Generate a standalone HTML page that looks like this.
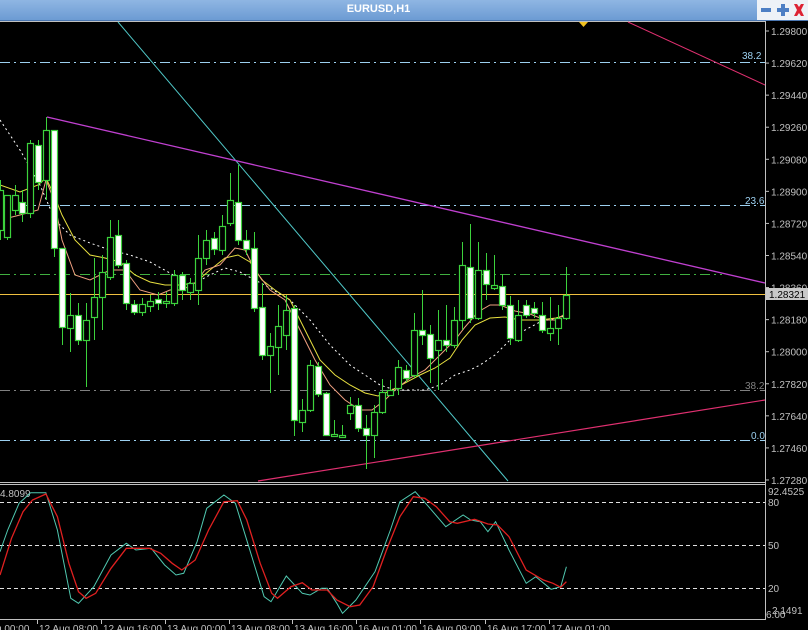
<!DOCTYPE html>
<html><head><meta charset="utf-8"><style>
html,body{margin:0;padding:0;background:#000;width:808px;height:630px;overflow:hidden;font-family:"Liberation Sans",sans-serif}
#t{position:absolute;left:0;top:0;width:808px;height:20px;background:linear-gradient(#8fb6e3,#6c9bd3);border-bottom:1px solid #4a76b0}
#t span{position:absolute;left:0;width:757px;text-align:center;top:3px;color:#fff;font-weight:bold;font-size:11px;font-family:"Liberation Sans Narrow","Liberation Sans",sans-serif}
#b{position:absolute;left:757px;top:0;width:51px;height:20px;background:#eef2f7}
svg{position:absolute;left:0;top:0}
</style></head><body>
<div id="t"><span>EURUSD,H1</span><div id="b">
<svg width="51" height="20"><rect x="4" y="8" width="10" height="4" fill="#4d7fc4"/><path d="M20 8h4v-4h4v4h4v4h-4v4h-4v-4h-4z" fill="#4d7fc4"/><path d="M37 4l3 0 2 3 2-3 3 0-3 6 3 6-3 0-2-3-2 3-3 0 3-6z" fill="#d23"/></svg></div></div>
<svg id="s" width="808" height="630" style="top:0" font-family="Liberation Sans, sans-serif" font-size="10">
<rect x="0" y="21" width="766" height="1" fill="#c0c0c0"/>
<line x1="765.5" y1="21" x2="765.5" y2="620" stroke="#c0c0c0"/>
<line x1="0" y1="482.5" x2="766" y2="482.5" stroke="#c0c0c0"/>
<line x1="0" y1="484.5" x2="766" y2="484.5" stroke="#c0c0c0"/>
<line x1="0" y1="619.5" x2="766" y2="619.5" stroke="#c0c0c0"/>
<g id="lv"></g>
<g id="cd"></g>
<g id="ax" fill="#c0c0c0"></g>
</svg>
<script>
var NS="http://www.w3.org/2000/svg",s=document.getElementById('s');
function el(n,a,p){var e=document.createElementNS(NS,n);for(var k in a)e.setAttribute(k,a[k]);(p||s).appendChild(e);return e}
function pl(pts,c,w,d,p){el('polyline',{points:pts.map(function(q){return q.join(',')}).join(' '),fill:'none',stroke:c,'stroke-width':w||1,'stroke-dasharray':d||''},p)}
var lv=document.getElementById('lv');
el('line',{x1:0,y1:62.5,x2:765,y2:62.5,stroke:'#9cd0f0','stroke-dasharray':'10,4,2,4'},lv);
el('line',{x1:0,y1:205.5,x2:765,y2:205.5,stroke:'#9cd0f0','stroke-dasharray':'10,4,2,4'},lv);
el('line',{x1:0,y1:274.5,x2:722,y2:274.5,stroke:'#40b040','stroke-dasharray':'10,4,2,4'},lv);
el('line',{x1:0,y1:294.5,x2:765,y2:294.5,stroke:'#f0c040'},lv);
el('line',{x1:0,y1:390.5,x2:765,y2:390.5,stroke:'#808080','stroke-dasharray':'10,4,2,4'},lv);
el('line',{x1:0,y1:440.5,x2:765,y2:440.5,stroke:'#9cd0f0','stroke-dasharray':'10,4,2,4'},lv);
[[742,59,'38.2','#9cd0f0'],[745,204,'23.6','#9cd0f0'],[745,389,'38.2','#808080'],[751,439,'0.0','#9cd0f0']].forEach(function(a){var t=el('text',{x:a[0],y:a[1],fill:a[3],'font-size':10},lv);t.textContent=a[2]});
el('line',{x1:118,y1:22,x2:508,y2:481,stroke:'#50c8c8'},lv);
el('line',{x1:47,y1:117,x2:765,y2:283,stroke:'#c040d0','stroke-width':1.3},lv);
el('line',{x1:628,y1:22,x2:765,y2:85,stroke:'#e03070'},lv);
el('line',{x1:258,y1:481,x2:765,y2:400,stroke:'#e03070','stroke-width':1.2},lv);
el('path',{d:'M579 22h9l-4.5 5z',fill:'#f0c020'},lv);
pl([[0,120],[20,150],[40,185],[55,220],[70,235],[90,243],[110,250],[130,255],[150,262],[170,273],[185,283],[195,283],[210,275],[225,268],[240,272],[255,280],[270,288],[290,300],[310,320],[330,345],[350,365],[365,375],[380,385],[395,390],[410,390],[425,390],[440,385],[455,375],[470,370],[480,365],[495,355],[510,340],[525,330],[540,322],[556,318],[566,316]],'#fff',1,'2,3',lv);
pl([[0,185],[20,192],[38,185],[46,178],[54,195],[62,215],[75,240],[90,255],[105,258],[120,262],[135,275],[150,282],[165,285],[180,285],[195,283],[210,270],[225,258],[238,255],[250,262],[262,280],[275,290],[290,300],[305,330],[320,360],[335,375],[350,385],[365,393],[378,396],[392,390],[405,383],[420,375],[435,368],[450,358],[462,340],[475,325],[490,318],[505,317],[520,320],[540,320],[556,318],[566,315]],'#e8e040',1,'',lv);
pl([[0,220],[20,215],[38,210],[46,180],[54,200],[62,240],[75,275],[90,280],[110,270],[125,270],[140,290],[158,295],[170,290],[182,290],[195,283],[205,270],[220,265],[235,248],[245,250],[255,270],[270,290],[285,300],[300,330],[315,360],[330,385],[345,400],[360,410],[372,410],[385,400],[395,390],[410,378],[425,370],[440,355],[455,340],[465,327],[478,312],[490,305],[500,305],[515,311],[530,314],[545,320],[556,320],[566,313]],'#f0a080',1,'',lv);
var C=[[0,190,230,180,240,0],[7,195,237,195,240,0],[15,195,210,185,215,0],[22,202,213,190,222,1],[30,143,213,140,218,0],[38,145,182,140,190,1],[46,130,180,117,200,0],[54,130,248,130,257,1],[62,248,327,248,345,1],[70,315,328,293,352,0],[78,315,340,303,345,1],[86,320,340,303,387,0],[94,297,317,258,340,0],[102,272,297,255,330,0],[110,237,277,220,280,0],[118,235,265,220,268,1],[126,263,303,260,310,1],[134,304,312,300,315,1],[142,304,312,298,316,0],[150,301,306,295,312,0],[158,299,303,292,310,1],[166,301,303,292,308,0],[174,275,303,270,306,0],[182,275,290,272,300,1],[190,283,292,278,300,0],[198,258,290,235,305,0],[206,240,258,230,265,0],[214,238,249,232,255,1],[222,226,250,215,255,0],[230,200,223,173,226,0],[238,202,240,165,245,1],[246,240,249,230,255,1],[254,248,308,232,312,1],[262,307,355,283,360,1],[270,346,355,333,393,0],[278,326,347,305,375,0],[286,310,335,295,350,0],[294,308,420,305,436,1],[302,410,422,399,432,0],[310,365,410,360,412,0],[318,366,394,362,397,1],[326,393,435,392,436,1],[334,434,436,420,437,0],[342,435,437,425,438,0],[350,405,413,397,420,0],[358,405,428,398,432,1],[366,428,435,415,469,1],[374,412,435,405,458,0],[382,392,412,379,414,0],[390,390,395,380,396,0],[398,367,388,360,395,0],[406,370,378,365,382,1],[414,330,375,313,378,0],[422,330,335,290,345,1],[430,334,358,325,383,1],[438,340,350,310,390,0],[446,340,345,305,352,1],[454,320,345,307,348,0],[462,265,320,242,330,0],[470,267,318,224,323,1],[478,270,318,242,320,0],[486,270,284,253,300,1],[494,285,288,255,290,0],[502,286,305,274,310,1],[510,305,338,296,345,1],[518,315,340,300,342,0],[526,305,315,300,318,1],[534,308,313,302,318,1],[542,315,330,302,333,1],[550,328,333,297,341,0],[558,318,328,305,345,0],[566,295,318,267,320,0]];
var cd=document.getElementById('cd');
C.forEach(function(c){var x=c[0];el('line',{x1:x+.5,y1:c[3],x2:x+.5,y2:c[4],stroke:'#3cd23c'},cd);var h=Math.max(c[2]-c[1],1);el('rect',{x:x-2.5,y:c[1]+.5,width:6,height:h,fill:c[5]?'#fff':'#000',stroke:'#3cd23c','stroke-width':1.2},cd)});
var ax=document.getElementById('ax');
['1.29800','1.29620','1.29440','1.29260','1.29080','1.28900','1.28720','1.28540','1.28360','1.28180','1.28000','1.27820','1.27640','1.27460','1.27280'].forEach(function(p,i){var y=31+i*32.07;el('line',{x1:766,y1:y,x2:769,y2:y,stroke:'#c0c0c0'},ax);var t=el('text',{x:771,y:y+4,'font-size':10},ax);t.textContent=p});
el('rect',{x:766,y:288,width:42,height:12,fill:'#c8c8c8'},ax);
var t=el('text',{x:769,y:298,fill:'#000','font-size':10},ax);t.textContent='1.28321';
[502.5,545.5,588.5].forEach(function(y){el('line',{x1:0,y1:y,x2:765,y2:y,stroke:'#e0e0e0','stroke-dasharray':'4,3'},ax)});
[['92.4525',768,495],['80',768,506],['50',768,549],['20',768,592],['6.00',766,618],['2.1491',772,614],['4.8099',0,497]].forEach(function(a){var t=el('text',{x:a[1],y:a[2],'font-size':10,fill:'#c0c0c0'},ax);t.textContent=a[0]});
function cv(a){return a.map(function(q){return [+(q[0]/2.613).toFixed(1),+(480+q[1]/3).toFixed(1)]})}
pl(cv([[0,215],[20,150],[50,70],[80,38],[120,38],[150,150],[185,355],[205,370],[245,320],[290,225],[330,190],[355,210],[395,205],[430,255],[460,285],[480,280],[515,185],[540,85],[585,45],[615,70],[650,200],[690,350],[708,365],[748,288],[790,340],[810,345],[840,325],[855,325],[880,370],[895,400],[930,360],[980,275],[1020,150],[1045,65],[1085,35],[1120,80],[1165,140],[1210,105],[1230,120],[1255,125],[1275,155],[1295,125],[1330,210],[1375,310],[1400,290],[1440,328],[1465,320],[1480,260]]),'#50c8b0',1,'',ax);
pl(cv([[0,285],[30,175],[60,95],[85,60],[120,42],[150,110],[180,250],[205,335],[225,355],[250,340],[290,265],[330,205],[390,205],[420,220],[450,250],[475,270],[510,240],[545,150],[585,65],[620,62],[645,120],[680,250],[710,340],[725,355],[760,320],[790,308],[815,330],[855,330],[880,360],[915,380],[940,375],[975,320],[1010,210],[1045,110],[1080,50],[1110,55],[1140,80],[1175,125],[1195,130],[1240,118],[1275,132],[1300,135],[1330,170],[1375,270],[1420,300],[1445,310],[1465,322],[1480,305]]),'#e02020',1.3,'',ax);
[['2 Aug 00:00',-25],['12 Aug 08:00',38],['12 Aug 16:00',102],['13 Aug 00:00',166],['13 Aug 08:00',230],['13 Aug 16:00',293],['16 Aug 01:00',357],['16 Aug 09:00',421],['16 Aug 17:00',486],['17 Aug 01:00',550]].forEach(function(a){el('line',{x1:a[1]-0.5,y1:620,x2:a[1]-0.5,y2:624,stroke:'#c0c0c0'},ax);var t=el('text',{x:a[1]+1,y:632,'font-size':10},ax);t.textContent=a[0]});
</script>
</body></html>
